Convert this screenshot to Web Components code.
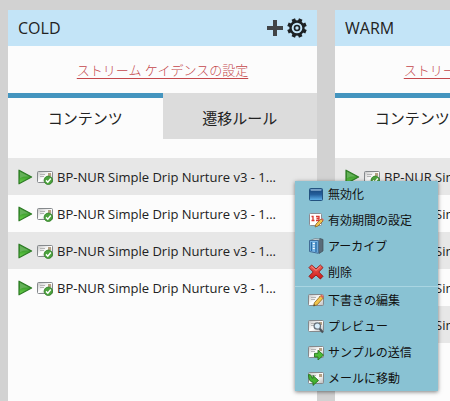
<!DOCTYPE html>
<html lang="ja">
<head>
<meta charset="utf-8">
<meta name="viewport" content="width=device-width, initial-scale=1">
<title>ストリーム</title>
<style>
body {
    margin: 0;
    background: #d2d2d2;
    color: #222;
    font-family: "Open Sans", "Noto Sans CJK JP", sans-serif;
}
</style>
</head>
<body>
<engagement-board>
    <stream-column name="COLD" count="4"></stream-column>
    <stream-column name="WARM" count="5"></stream-column>
    <context-menu slot="menu">
        <menu-entry icon="disable">無効化</menu-entry>
        <menu-entry icon="calendar">有効期間の設定</menu-entry>
        <menu-entry icon="archive">アーカイブ</menu-entry>
        <menu-entry icon="delete">削除</menu-entry>
        <menu-entry icon="edit" divided>下書きの編集</menu-entry>
        <menu-entry icon="preview">プレビュー</menu-entry>
        <menu-entry icon="send">サンプルの送信</menu-entry>
        <menu-entry icon="move">メールに移動</menu-entry>
    </context-menu>
</engagement-board>

<script>
const mail = `
    <rect x="0.5" y="2.5" width="15" height="11" rx="1" fill="url(#paper)" stroke="#85898c"/>
    <path d="M3 5.5h5M3 7.5h4" stroke="#b5b5b5"/>
    <rect x="11" y="4" width="3" height="3" fill="#b5a184"/>`

const defs = `
    <defs>
        <linearGradient id="paper" x1="0" y1="0" x2="1" y2="1">
            <stop offset="0" stop-color="#c4c4c4"/><stop offset=".5" stop-color="#fff"/><stop offset="1" stop-color="#bbb"/>
        </linearGradient>
        <linearGradient id="green" x1="0" y1="0" x2="0" y2="1">
            <stop offset="0" stop-color="#3f9a32"/><stop offset=".45" stop-color="#3c9c2e"/><stop offset="1" stop-color="#6fdc4c"/>
        </linearGradient>
        <linearGradient id="blue" x1="0" y1="0" x2="0" y2="1">
            <stop offset="0" stop-color="#5c8fbd"/><stop offset=".25" stop-color="#1d5189"/><stop offset=".5" stop-color="#245f9c"/><stop offset="1" stop-color="#62b5ee"/>
        </linearGradient>
        <linearGradient id="red" x1="0" y1="0" x2="0" y2="1">
            <stop offset="0" stop-color="#f0665a"/><stop offset="1" stop-color="#cf1717"/>
        </linearGradient>
    </defs>`

const icons = {
    plus: `<path d="M8 0v16M0 8h16" stroke="#414447" stroke-width="4"/>`,
    gear: `
        <g stroke="#1d2124" stroke-width="3">
            <path d="M8 .2v3M8 12.8v3M.2 8h3M12.8 8h3" transform="rotate(22.5 8 8)"/>
            <path d="M8 .2v3M8 12.8v3M.2 8h3M12.8 8h3" transform="rotate(67.5 8 8)"/>
        </g>
        <circle cx="8" cy="8" r="5.2" fill="none" stroke="#1d2124" stroke-width="1.9"/>
        <circle cx="8" cy="8" r="2" fill="none" stroke="#1d2124" stroke-width="1.3"/>`,
    play: `
        <path d="M2 1.2L14.6 8 2 14.8z" fill="url(#green)" stroke="#2c7a24" stroke-width="1.2" stroke-linejoin="round"/>
        <path d="M3 2.8L12 7.6Q7 7.2 3 9z" fill="#8bc681" opacity=".5"/>`,
    approved: `${mail}
        <circle cx="11.3" cy="11.3" r="4.2" fill="#4ca33d" stroke="#327d2a" stroke-width=".8"/>
        <path d="M9 11.4l1.8 1.8 3-3.6" fill="none" stroke="#fff" stroke-width="1.5"/>`,
    disable: `
        <rect x="1.5" y="2.5" width="13" height="12" rx="1" fill="url(#blue)" stroke="#23527f"/>
        <path d="M3 4h10" stroke="#a7c7e2"/>`,
    calendar: `
        <rect x="1.5" y="1.5" width="12" height="12" rx="1" fill="#fff" stroke="#8d8b92"/>
        <path d="M3.5 4.5H5v4M3.5 8.5h3M8 4.5h3v4H8M8.5 6.5H11" fill="none" stroke="#d83a32" stroke-width="1.3"/>
        <path d="M7 15l1-3 5-5 2 2-5 5z" fill="#f2c14a" stroke="#8b6527" stroke-width=".8"/>
        <path d="M13 7l1-1 2 2-1 1z" fill="#d9655d"/>`,
    archive: `
        <path d="M9 3l3-2.5 3 1V13l-4 2.5z" fill="#596b79" stroke="#3f4d58" stroke-width=".7"/>
        <path d="M2 2.5l5-2 5 .5-2 2z" fill="#c5cfd6" stroke="#66737e" stroke-width=".6"/>
        <path d="M1.5 2.5h8.8v12.8L1.5 13.5z" fill="#77b6e6" stroke="#426d96"/>
        <path d="M3.5 4v9M8 4v10" stroke="#2c6da7" stroke-width="1.4"/>
        <path d="M4.8 5.5h2M4.8 8h2M4.8 10.5h2" stroke="#fff" stroke-width="1.2"/>`,
    delete: `
        <path d="M3.6 1L8 5l4.4-4L15 3.6 10.8 8l4.2 4.3-2.6 2.7L8 11l-4.4 4L1 12.3 5.2 8 1 3.6z" fill="url(#red)" stroke="#8f1613" stroke-width=".9" stroke-linejoin="round"/>
        <path d="M3.6 2.4L8 6.4l4.4-4" fill="none" stroke="#f7a39a" stroke-width=".8"/>`,
    edit: `${mail}
        <path d="M5.5 14l1-3.4 6.3-7 2.6 2.3-6.3 7z" fill="#f3c54b" stroke="#8a6827" stroke-width=".8"/>
        <path d="M12.2 4.2l1.5-1.6 2.3 2-1.3 1.6z" fill="#d7685a"/>
        <path d="M5.5 14l.6-1.8 1.3 1.1z" fill="#333"/>`,
    preview: `${mail}
        <path d="M11.5 10.5l3.5 4" stroke="#4b535a" stroke-width="2.2"/>
        <circle cx="9.3" cy="8" r="3.2" fill="#d9eefb" stroke="#67717a" stroke-width="1.3"/>`,
    send: `${mail}
        <path d="M6.5 9.3H10V6.2l5.5 4.9L10 16v-3H6.5z" fill="#4dbb36" stroke="#24751d" stroke-width=".9"/>`,
    move: `${mail}
        <path d="M.6 4.5C3 4.6 3.8 6.2 4 8.2h1V5.5l5.5 5L5 15.4v-3.2C2 12 .4 9 .6 4.5z" fill="#45b331" stroke="#22701c" stroke-width=".9"/>`
}

class StreamIcon extends HTMLElement {
    connectedCallback() {
        const root = this.attachShadow({ mode: "open" })
        root.innerHTML = `
            <style>
            :host {
                display: block;
                flex: none;
                width: 16px;
                height: 16px;
            }
            svg {
                display: block;
                width: 100%;
                height: 100%;
            }
            </style>
            <svg viewBox="0 0 16 16" aria-hidden="true">${defs}${icons[this.getAttribute("name")]}</svg>
        `
    }
}

class StreamContent extends HTMLElement {
    constructor() {
        super()
        this.attachShadow({ mode: "open" }).innerHTML = `
            <style>
            :host {
                display: flex;
                align-items: center;
                gap: 4px;
                height: 37px;
                padding: 0 9px;
                font-size: 13px;
                line-height: 20px;
                white-space: nowrap;
            }
            :host(:nth-child(odd)) {
                background: #e7e7e7;
            }
            </style>
            <stream-icon name="play"></stream-icon>
            <stream-icon name="approved"></stream-icon>
            <span><slot></slot></span>
        `
    }
}

class StreamColumn extends HTMLElement {
    connectedCallback() {
        const name = this.getAttribute("name")
        const count = Number(this.getAttribute("count"))
        const root = this.attachShadow({ mode: "open" })
        root.innerHTML = `
            <style>
            :host {
                display: block;
                flex: 0 0 309px;
                background: #fcfcfc;
            }
            header {
                display: flex;
                align-items: center;
                gap: 4px;
                height: 36px;
                padding: 0 10px;
                background: #c3e4f7;
            }
            h2 {
                flex: 1;
                margin: 0;
                font-size: 16px;
                font-weight: 400;
                line-height: 24px;
            }
            button {
                margin: 0;
                padding: 0;
                border: 0;
                background: none;
                color: inherit;
                font: inherit;
            }
            .gear {
                width: 20px;
                height: 20px;
            }
            .cadence {
                display: flex;
                align-items: center;
                justify-content: center;
                height: 47px;
                font-size: 13px;
            }
            a {
                color: #c4474b;
                font-weight: 300;
                text-underline-offset: 3px;
            }
            .tabs {
                display: grid;
                grid-template-columns: 1fr 1fr;
                margin-bottom: 19px;
            }
            .tabs button {
                height: 46px;
                background: #dcdcdc;
                border-top: 5px solid #dcdcdc;
                font-size: 15px;
                padding-bottom: 2px;
            }
            .tabs button[aria-selected="true"] {
                background: #fcfcfc;
                border-top-color: #4495bf;
            }
            </style>
            <header>
                <h2>${name}</h2>
                <button aria-label="追加"><stream-icon name="plus"></stream-icon></button>
                <button aria-label="設定"><stream-icon class="gear" name="gear"></stream-icon></button>
            </header>
            <div class="cadence"><a href="#cadence">ストリーム ケイデンスの設定</a></div>
            <div class="tabs" role="tablist">
                <button role="tab" aria-selected="true">コンテンツ</button>
                <button role="tab" aria-selected="false">遷移ルール</button>
            </div>
            <div class="list">
                ${"<stream-content>BP-NUR Simple Drip Nurture v3 - 1...</stream-content>".repeat(count)}
            </div>
        `
    }
}

class MenuEntry extends HTMLElement {
    connectedCallback() {
        this.attachShadow({ mode: "open" }).innerHTML = `
            <style>
            :host {
                display: block;
            }
            :host([divided]) {
                margin-top: 1px;
                border-top: 1px solid #a9d5e2;
            }
            button {
                display: flex;
                align-items: center;
                gap: 4px;
                width: 100%;
                height: 26px;
                padding: 0 26px 0 13px;
                border: 0;
                background: none;
                color: #111;
                font: inherit;
                white-space: nowrap;
            }
            </style>
            <button role="menuitem">
                <stream-icon name="${this.getAttribute("icon")}"></stream-icon>
                <span><slot></slot></span>
            </button>
        `
    }
}

class ContextMenu extends HTMLElement {
    constructor() {
        super()
        this.attachShadow({ mode: "open" }).innerHTML = `
            <style>
            :host {
                display: block;
                background: #89c2d3;
                box-shadow: 0 1px 4px rgba(0, 0, 0, .5);
                font-size: 12px;
            }
            </style>
            <div role="menu"><slot></slot></div>
        `
    }
}

class EngagementBoard extends HTMLElement {
    constructor() {
        super()
        this.attachShadow({ mode: "open" }).innerHTML = `
            <style>
            :host {
                display: block;
                position: relative;
                overflow: hidden;
            }
            .columns {
                display: flex;
                gap: 18px;
                min-height: 100vh;
                box-sizing: border-box;
                padding: 10px 8px 0;
            }
            /* opened from the first row of the first stream */
            ::slotted([slot="menu"]) {
                position: absolute;
                left: 295px;
                top: 181px;
            }
            </style>
            <div class="columns"><slot></slot></div>
            <slot name="menu"></slot>
        `
    }
}

window.customElements.define("stream-icon", StreamIcon)
window.customElements.define("stream-content", StreamContent)
window.customElements.define("stream-column", StreamColumn)
window.customElements.define("menu-entry", MenuEntry)
window.customElements.define("context-menu", ContextMenu)
window.customElements.define("engagement-board", EngagementBoard)
</script>
</body>
</html>
